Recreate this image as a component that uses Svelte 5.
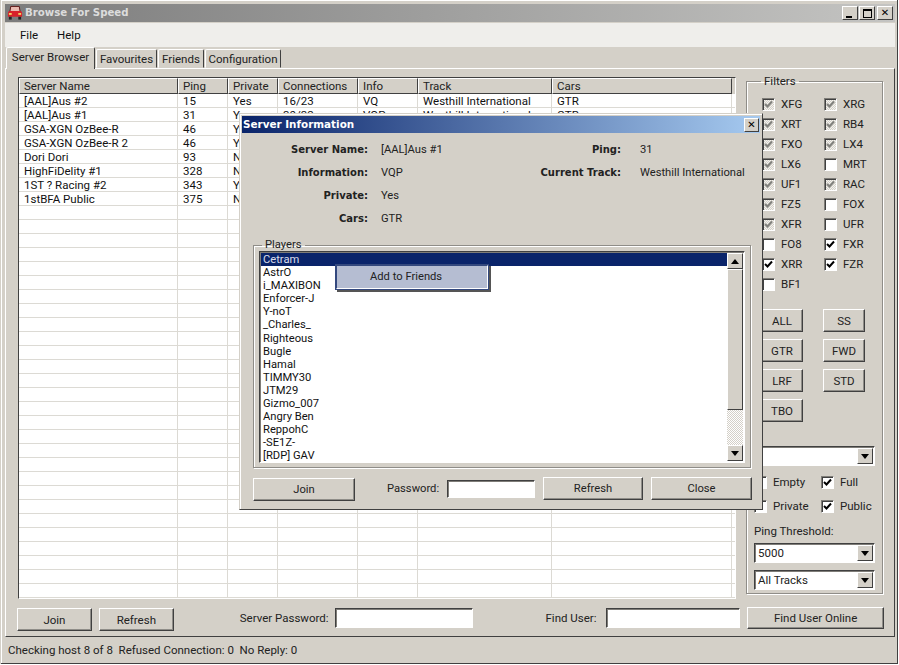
<script>
  const serverRows = [
    ['[AAL]Aus #2', '15', 'Yes', '16/23', 'VQ', 'Westhill International', 'GTR'],
    ['[AAL]Aus #1', '31', 'Yes', '30/32', 'VQP', 'Westhill International', 'GTR'],
    ['GSA-XGN OzBee-R', '46', 'Yes'],
    ['GSA-XGN OzBee-R 2', '46', 'Yes'],
    ['Dori Dori', '93', 'No'],
    ['HighFiDelity #1', '328', 'No'],
    ['1ST ? Racing #2', '343', 'Yes'],
    ['1stBFA Public', '375', 'No']
  ];
  const blankRows = Array.from({ length: 28 });
  const columns = ['Server Name', 'Ping', 'Private', 'Connections', 'Info', 'Track', 'Cars'];

  // name, state: 'off' | 'grey' | 'on'
  const filterCars = [
    ['XFG', 'grey'], ['XRG', 'grey'],
    ['XRT', 'grey'], ['RB4', 'grey'],
    ['FXO', 'grey'], ['LX4', 'grey'],
    ['LX6', 'grey'], ['MRT', 'off'],
    ['UF1', 'grey'], ['RAC', 'grey'],
    ['FZ5', 'grey'], ['FOX', 'off'],
    ['XFR', 'grey'], ['UFR', 'off'],
    ['FO8', 'off'], ['FXR', 'on'],
    ['XRR', 'on'], ['FZR', 'on'],
    ['BF1', 'off']
  ];
  const classButtons = ['ALL', 'SS', 'GTR', 'FWD', 'LRF', 'STD', 'TBO'];
  const players = [
    'Cetram', 'AstrO', 'i_MAXIBON', 'Enforcer-J', 'Y-noT', '_Charles_', 'Righteous', 'Bugle',
    'Hamal', 'TIMMY30', 'JTM29', 'Gizmo_007', 'Angry Ben', 'ReppohC', '-SE1Z-', '[RDP] GAV'
  ];
  const infoLeft = [
    ['Server Name:', '[AAL]Aus #1'],
    ['Information:', 'VQP'],
    ['Private:', 'Yes'],
    ['Cars:', 'GTR']
  ];
  const infoRight = [
    ['Ping:', '31'],
    ['Current Track:', 'Westhill International']
  ];
</script>

{#snippet check(state)}
  <span class="check {state}">
    {#if state !== 'off'}
      <svg width="9" height="9" viewBox="0 0 9 9"><path d="M1 4 L3.5 6.5 L8 1.5" fill="none" stroke="currentColor" stroke-width="2" /></svg>
    {/if}
  </span>
{/snippet}

{#snippet arrow(up)}
  <svg width="8" height="5" viewBox="0 0 8 5">
    {#if up}<path d="M4 0 L8 5 L0 5 Z" />{:else}<path d="M0 0 L8 0 L4 5 Z" />{/if}
  </svg>
{/snippet}

{#snippet combo(text, cls)}
  <div class="combo {cls}">
    <span class="combo-text">{text}</span>
    <span class="combo-btn">{@render arrow(false)}</span>
  </div>
{/snippet}

<div class="window">
  <div class="titlebar">
    <svg class="app-icon" width="16" height="16" viewBox="0 0 17 16">
      <path d="M4 1 H13 L14 7 H3 Z" fill="#e9b9b0" stroke="#5a1010" stroke-width="1" />
      <path d="M1 8 Q1 6 3 6 H14 Q16 6 16 8 V12 H1 Z" fill="#d8202a" />
      <rect x="2" y="12" width="3" height="3" fill="#222" />
      <rect x="12" y="12" width="3" height="3" fill="#222" />
      <rect x="2" y="8" width="3" height="2" fill="#f3d060" />
      <rect x="12" y="8" width="3" height="2" fill="#f3d060" />
    </svg>
    <span class="title-text">Browse For Speed</span>
    <div class="win-buttons">
      <span class="win-btn"><i class="min"></i></span>
      <span class="win-btn"><i class="max"></i></span>
      <span class="win-btn close">✕</span>
    </div>
  </div>

  <div class="menubar">
    <span>File</span>
    <span>Help</span>
  </div>

  <div class="tabs">
    <span class="tab active">Server Browser</span>
    <span class="tab t-fav">Favourites</span>
    <span class="tab t-fr">Friends</span>
    <span class="tab t-cfg">Configuration</span>
  </div>

  <div class="panel">
    <div class="browser-row">
      <div class="table">
        <div class="tr head">
          {#each columns as c}<span class="td">{c}</span>{/each}
        </div>
        {#each serverRows as row}
          <div class="tr">
            {#each columns as c, i}<span class="td">{row[i] ?? ''}</span>{/each}
          </div>
        {/each}
        {#each blankRows as _}
          <div class="tr">
            {#each columns as c}<span class="td"></span>{/each}
          </div>
        {/each}
      </div>

      <fieldset class="filters">
        <legend>Filters</legend>
        <div class="car-grid">
          {#each filterCars as [name, state]}
            <div class="car">{@render check(state)}<span>{name}</span></div>
          {/each}
        </div>
        <div class="class-grid">
          {#each classButtons as b}<button class="btn">{b}</button>{/each}
        </div>
        {@render combo('', 'first')}
        <div class="flag-grid">
          <div class="flag">{@render check('off')}<span>Empty</span></div>
          <div class="flag">{@render check('on')}<span>Full</span></div>
          <div class="flag">{@render check('off')}<span>Private</span></div>
          <div class="flag">{@render check('on')}<span>Public</span></div>
        </div>
        <div class="ping-label">Ping Threshold:</div>
        {@render combo('5000', 'ping')}
        {@render combo('All Tracks', 'tracks')}
      </fieldset>
    </div>

    <div class="action-row">
      <button class="btn join">Join</button>
      <button class="btn refresh">Refresh</button>
      <span class="lbl pw-lbl">Server Password:</span>
      <span class="input pw"></span>
      <span class="lbl fu-lbl">Find User:</span>
      <span class="input fu"></span>
      <button class="btn find">Find User Online</button>
    </div>
  </div>

  <div class="status">Checking host 8 of 8&nbsp; Refused Connection: 0&nbsp; No Reply: 0</div>

  <div class="dialog">
    <div class="dlg-title">
      <span>Server Information</span>
      <span class="win-btn close dlg-close">✕</span>
    </div>
    <div class="dlg-info">
      <div class="info-col left">
        {#each infoLeft as [k, v]}
          <b>{k}</b><span>{v}</span>
        {/each}
      </div>
      <div class="info-col right">
        {#each infoRight as [k, v]}
          <b>{k}</b><span>{v}</span>
        {/each}
      </div>
    </div>

    <fieldset class="players">
      <legend>Players</legend>
      <div class="list">
        <div class="list-items">
          {#each players as p, i}
            <div class="player" class:sel={i === 0}>{p}</div>
          {/each}
        </div>
        <div class="scroll">
          <span class="sb-btn">{@render arrow(true)}</span>
          <span class="sb-thumb"></span>
          <span class="sb-track"></span>
          <span class="sb-btn">{@render arrow(false)}</span>
        </div>
      </div>
    </fieldset>

    <div class="dlg-actions">
      <button class="btn d-join">Join</button>
      <span class="lbl d-pw">Password:</span>
      <span class="input d-input"></span>
      <button class="btn d-refresh">Refresh</button>
      <button class="btn d-close-btn">Close</button>
    </div>

    <div class="context">Add to Friends</div>
  </div>
</div>

<style>
  :global(body) {
    margin: 0;
    background: #fff;
  }

  .window {
    position: relative;
    width: 898px;
    height: 664px;
    box-sizing: border-box;
    padding: 4px 3px 3px 4px;
    background: #d4d0c8;
    border-left: 1px solid #d4d0c8;
    box-shadow: inset -1px -1px 0 #404040, inset 1px 1px 0 #fff;
    font: 11.5px/14px Roboto, "Open Sans", sans-serif;
    color: #222;
    overflow: hidden;
  }

  .titlebar {
    height: 18px;
    display: flex;
    align-items: center;
    background: linear-gradient(90deg, #7c7c7c, #c4c4c2);
    color: #dcdcdc;
    font: bold 10.2px/18px "DejaVu Sans", sans-serif;
  }

  .app-icon {
    margin: 0 2px 0 2px;
  }

  .win-buttons {
    margin-left: auto;
    margin-right: 2px;
    display: flex;
    gap: 0;
  }

  .win-btn {
    width: 16px;
    height: 14px;
    box-sizing: border-box;
    background: #d4d0c8;
    border: 1px solid;
    border-color: #fff #404040 #404040 #fff;
    display: inline-flex;
    align-items: center;
    justify-content: center;
    color: #000;
    margin-left: 1px;
  }

  .win-btn.close {
    margin-left: 2px;
    font: bold 10px/12px "DejaVu Sans", sans-serif;
  }

  .win-btn .min {
    width: 6px;
    height: 2px;
    background: #000;
    margin-top: 7px;
    margin-right: 2px;
  }

  .win-btn .max {
    width: 9px;
    height: 9px;
    box-sizing: border-box;
    border: 1px solid #000;
    border-top-width: 2px;
  }

  .menubar {
    height: 24px;
    margin-top: 1px;
    background: #efeeeb;
    display: flex;
    align-items: center;
    gap: 19px;
    padding-left: 15px;
    color: #111;
  }

  .tabs {
    height: 21px;
    display: flex;
    align-items: flex-end;
    padding-left: 1px;
  }

  .tab {
    height: 19px;
    box-sizing: border-box;
    border: 1px solid;
    border-color: #fff #404040 transparent #fff;
    border-radius: 2px 2px 0 0;
    text-align: center;
    line-height: 18px;
    margin-right: 1px;
  }

  .tab.active {
    width: 89px;
    height: 22px;
    line-height: 18px;
    border-bottom: none;
    position: relative;
    z-index: 1;
    margin-bottom: -1px;
    background: #d4d0c8;
  }

  .t-fav { width: 61px; }
  .t-fr { width: 46px; }
  .t-cfg { width: 76px; }

  .panel {
    height: 569px;
    box-sizing: border-box;
    border: 1px solid;
    border-color: #fff #404040 #404040 #fff;
    padding: 8px 10px 0 12px;
  }

  .browser-row {
    display: flex;
    gap: 10px;
  }

  .table {
    width: 718px;
    height: 522px;
    box-sizing: border-box;
    background: #fff;
    border: 1px solid;
    border-color: #404040 #fff #fff #404040;
    overflow: hidden;
    flex: none;
  }

  .tr {
    display: grid;
    grid-template-columns: 159px 50px 50px 80px 60px 134px 180px;
    height: 14px;
    box-sizing: border-box;
    border-bottom: 1px solid #dcdad4;
    line-height: 14px;
  }

  .td {
    padding-left: 5px;
    border-right: 1px solid #dcdad4;
    overflow: hidden;
    white-space: nowrap;
    color: #111;
  }

  .tr.head {
    height: 16px;
    border-bottom: none;
    background: #d4d0c8;
  }

  .head .td {
    border: 1px solid;
    border-color: #fff #404040 #404040 #fff;
    line-height: 14px;
    padding-left: 4px;
    color: #222;
  }

  fieldset {
    margin: 0;
    min-width: 0;
    box-sizing: border-box;
    border: 1px solid #8f8d88;
    box-shadow: 1px 1px 0 #fff, inset 1px 1px 0 #fff;
  }

  legend {
    padding: 0 3px;
    line-height: 14px;
  }

  .filters {
    width: 137px;
    height: 520px;
    margin-top: -5px;
    padding: 0 7px;
    position: relative;
    top: 2px;
  }

  .filters legend {
    margin-left: 7px;
  }

  .car-grid {
    display: grid;
    grid-template-columns: 62px 62px;
    grid-auto-rows: 20px;
    margin-top: 6px;
    padding-left: 8px;
  }

  .car,
  .flag {
    display: flex;
    align-items: center;
    gap: 6px;
  }

  .check {
    width: 13px;
    height: 13px;
    box-sizing: border-box;
    flex: none;
    border: 1px solid;
    border-color: #7f7d78 #fff #fff #7f7d78;
    box-shadow: inset 1px 1px 0 #404040;
    background: #fff;
    display: inline-flex;
    align-items: center;
    justify-content: center;
    color: #000;
  }

  .check.grey {
    background: repeating-conic-gradient(#d4d0c8 0 25%, #f4f3f0 0 50%) 0 0 / 2px 2px;
    color: #80807c;
  }

  .class-grid {
    display: grid;
    grid-template-columns: 42px 42px;
    grid-auto-rows: 23px;
    column-gap: 20px;
    row-gap: 7px;
    margin-top: 15px;
    padding-left: 7px;
  }

  .btn {
    padding: 0;
    margin: 0;
    font: inherit;
    color: #222;
    background: #d4d0c8;
    border: 1px solid;
    border-color: #fff #404040 #404040 #fff;
    box-shadow: inset -1px -1px 0 #8f8d88;
    border-radius: 0;
  }

  .combo {
    height: 20px;
    box-sizing: border-box;
    border: 1px solid;
    border-color: #404040 #fff #fff #404040;
    box-shadow: inset 1px 1px 0 #7f7d78;
    background: #fff;
    display: flex;
    align-items: center;
    justify-content: space-between;
    padding-right: 1px;
  }

  .combo.first { margin-top: 24px; }
  .combo.ping { margin-top: 5px; }
  .combo.tracks { margin-top: 7px; }

  .combo-text {
    padding-left: 3px;
  }

  .combo-btn {
    width: 16px;
    height: 16px;
    box-sizing: border-box;
    background: #d4d0c8;
    border: 1px solid;
    border-color: #fff #404040 #404040 #fff;
    display: inline-flex;
    align-items: center;
    justify-content: center;
  }

  .flag-grid {
    display: grid;
    grid-template-columns: 67px 50px;
    grid-auto-rows: 24px;
    margin-top: 4px;
  }

  .ping-label {
    margin-top: 6px;
    line-height: 14px;
  }

  .action-row {
    display: flex;
    align-items: flex-start;
    margin-top: 7px;
    margin-left: -1px;
  }

  .action-row .join { width: 75px; height: 23px; margin-top: 2px; }
  .action-row .refresh { width: 75px; height: 23px; margin: 2px 0 0 7px; }
  .lbl { white-space: nowrap; line-height: 20px; }
  .pw-lbl { width: 85px; margin-left: 66px; margin-top: 2px; }
  .input {
    display: block;
    height: 20px;
    box-sizing: border-box;
    background: #fff;
    border: 1px solid;
    border-color: #404040 #fff #fff #404040;
    box-shadow: inset 1px 1px 0 #7f7d78;
  }
  .pw { width: 138px; margin: 2px 0 0 10px; }
  .fu-lbl { width: 50px; margin-left: 73px; margin-top: 2px; }
  .fu { width: 135px; margin: 2px 0 0 10px; }
  .find { width: 137px; height: 22px; margin: 1px 0 0 7px; }

  .status {
    height: 25px;
    line-height: 26px;
    padding-left: 3px;
    color: #222;
  }

  /* overlays */
  .dialog {
    position: absolute;
    left: 238px;
    top: 113px;
    width: 524px;
    height: 397px;
    box-sizing: border-box;
    background: #d4d0c8;
    border: 1px solid;
    border-color: #d4d0c8 #404040 #404040 #d4d0c8;
    box-shadow: inset 1px 1px 0 #fff;
    padding: 2px;
    font-size: 11.2px;
  }

  .dlg-title {
    height: 17px;
    display: flex;
    align-items: center;
    justify-content: space-between;
    padding: 0 1px 0 1px;
    background: linear-gradient(90deg, #0a246a, #a6caf0);
    color: #fff;
    font: bold 10.4px/17px "DejaVu Sans", sans-serif;
  }

  .dlg-close {
    width: 15px;
    height: 14px;
    margin-right: 0;
  }

  .dlg-info {
    height: 106px;
    position: relative;
  }

  .info-col {
    display: grid;
    grid-template-columns: 126px auto;
    column-gap: 13px;
    grid-auto-rows: 23px;
    align-items: center;
    position: absolute;
    top: 5px;
    left: 0;
  }

  .info-col b {
    text-align: right;
    font: bold 10px/14px "DejaVu Sans", sans-serif;
    white-space: nowrap;
  }

  .info-col.right {
    left: 259px;
    grid-template-columns: 120px auto;
    column-gap: 19px;
  }

  .players {
    width: 498px;
    height: 230px;
    margin: -1px 0 0 11px;
    padding: 0 5px;
  }

  .players legend {
    margin-left: 3px;
  }

  .list {
    height: 212px;
    margin-top: -1px;
    box-sizing: border-box;
    border: 1px solid;
    border-color: #404040 #fff #fff #404040;
    box-shadow: inset 1px 1px 0 #7f7d78;
    background: #fff;
    display: flex;
    padding: 1px;
  }

  .list-items {
    flex: 1;
    overflow: hidden;
  }

  .player {
    height: 13.1px;
    line-height: 13px;
    padding-left: 2px;
    color: #111;
  }

  .player.sel {
    background: #0a246a;
    color: #d8dcea;
  }

  .scroll {
    width: 16px;
    display: flex;
    flex-direction: column;
  }

  .sb-btn {
    height: 16px;
    box-sizing: border-box;
    background: #d4d0c8;
    border: 1px solid;
    border-color: #fff #404040 #404040 #fff;
    display: flex;
    align-items: center;
    justify-content: center;
    flex: none;
  }

  .sb-thumb {
    height: 141px;
    box-sizing: border-box;
    background: #d4d0c8;
    border: 1px solid;
    border-color: #fff #404040 #404040 #fff;
    flex: none;
  }

  .sb-track {
    flex: 1;
    background: repeating-conic-gradient(#d4d0c8 0 25%, #fff 0 50%) 0 0 / 2px 2px;
  }

  .dlg-actions {
    display: flex;
    align-items: flex-start;
    margin: 9px 0 0 11px;
  }

  .d-join { width: 102px; height: 23px; margin-top: 1px; }
  .d-pw { width: 50px; margin: 2px 0 0 32px; }
  .d-input { width: 88px; height: 18px; margin: 3px 0 0 10px; }
  .d-refresh { width: 100px; height: 23px; margin-left: 8px; }
  .d-close-btn { width: 101px; height: 23px; margin-left: 8px; }

  .context {
    position: absolute;
    left: 95px;
    top: 150px;
    width: 154px;
    height: 26px;
    box-sizing: border-box;
    border: 2px solid;
    border-color: #33487e #fff #fff #33487e;
    outline: 1px solid #33487e;
    outline-offset: -1px;
    box-shadow: 2px 2px 0 #555;
    background: #b5bdd2;
    line-height: 22px;
    padding-left: 33px;
  }
</style>
